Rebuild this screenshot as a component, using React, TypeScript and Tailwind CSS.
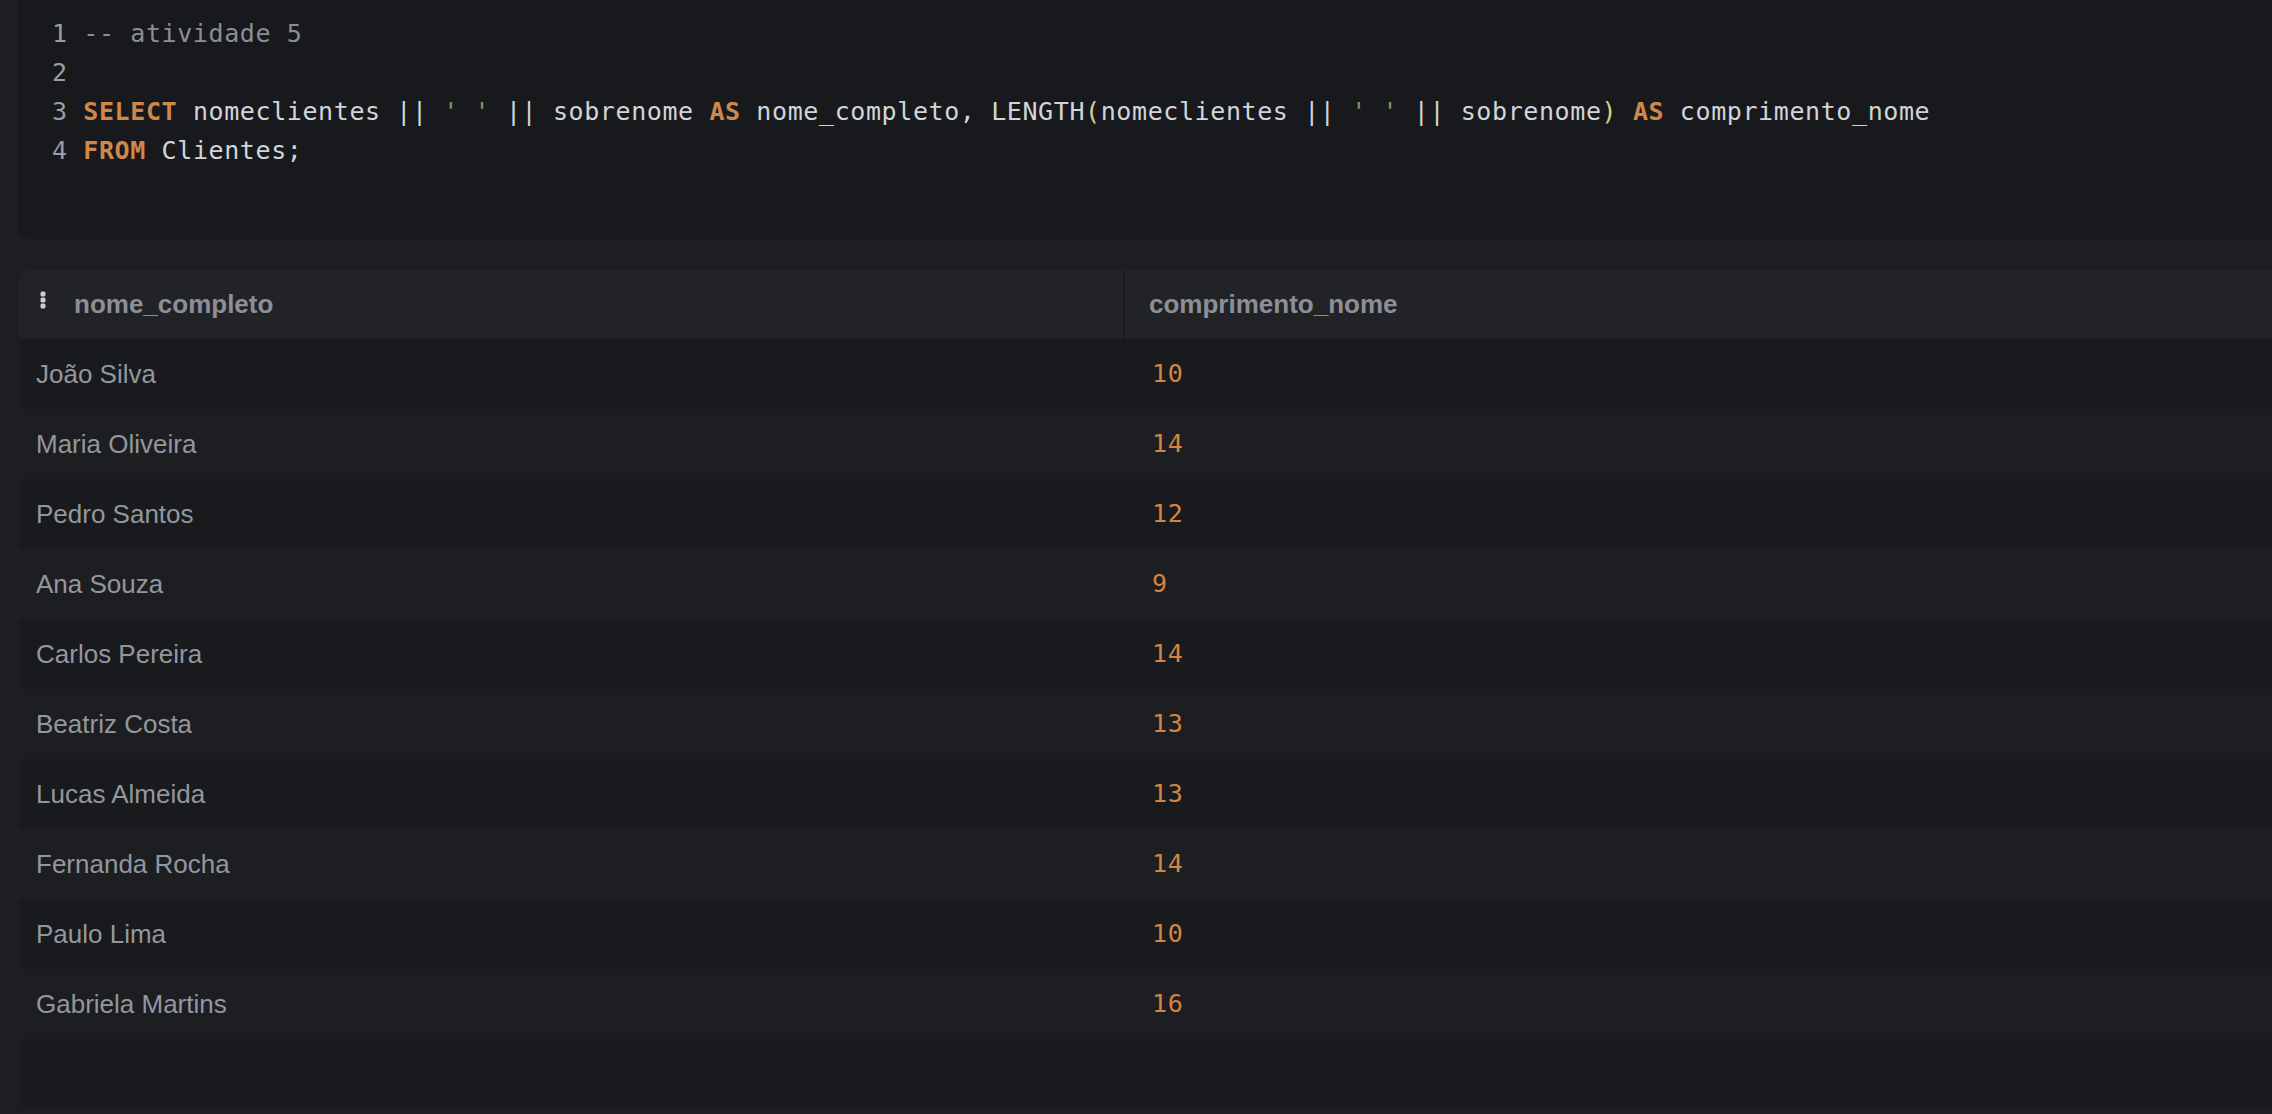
import React from "react";

const mono = "font-['DejaVu_Sans_Mono','Liberation_Mono',monospace] text-[25px] tracking-[0.6px]";
const sans = "font-['Liberation_Sans',Arial,sans-serif]";

type Tok = [string, string?];

const K = "text-[#d0874a] font-bold";
const S = "text-[#7d9867]";
const P = "text-[#d8d18e]";
const C = "text-[#8a8f96]";

const lines: Tok[][] = [
  [["-- atividade 5", C]],
  [],
  [
    ["SELECT", K],
    [" nomeclientes || "],
    ["' '", S],
    [" || sobrenome "],
    ["AS", K],
    [" nome_completo, LENGTH"],
    ["(", P],
    ["nomeclientes || "],
    ["' '", S],
    [" || sobrenome"],
    [")", P],
    [" "],
    ["AS", K],
    [" comprimento_nome"],
  ],
  [["FROM", K], [" Clientes;"]],
];

const rows: [string, number][] = [
  ["João Silva", 10],
  ["Maria Oliveira", 14],
  ["Pedro Santos", 12],
  ["Ana Souza", 9],
  ["Carlos Pereira", 14],
  ["Beatriz Costa", 13],
  ["Lucas Almeida", 13],
  ["Fernanda Rocha", 14],
  ["Paulo Lima", 10],
  ["Gabriela Martins", 16],
];

function Kebab() {
  return (
    <svg width="6" height="18" viewBox="0 0 6 18" className="shrink-0">
      <rect x="0.5" y="0.5" width="5" height="5" rx="1.5" fill="#c9cdd1" />
      <rect x="0.5" y="6.5" width="5" height="5" rx="1.5" fill="#c9cdd1" />
      <rect x="0.5" y="12.5" width="5" height="5" rx="1.5" fill="#c9cdd1" />
    </svg>
  );
}

export default function App() {
  return (
    <div className="w-[2272px] h-[1114px] overflow-hidden bg-[#1d1e22] pl-[18px] flex flex-col">
      {/* editor */}
      <div className={`h-[239px] shrink-0 bg-[#18191d] rounded-bl-[10px] pt-[14px] pl-[34px] ${mono} text-[#d2d5d8] whitespace-pre`}>
        {lines.map((toks, i) => (
          <div key={i} className="h-[39px] leading-[39px]">
            <span className="text-[#9a9da2]">{i + 1} </span>
            {toks.map(([t, cls], j) => (
              <span key={j} className={cls}>
                {t}
              </span>
            ))}
          </div>
        ))}
      </div>

      {/* results */}
      <div className="mt-[31px] ml-px h-[838px] shrink-0 bg-[#1a1b1f] rounded-tl-[10px] overflow-hidden">
        <div className={`flex h-[69px] bg-[#222327] ${sans} text-[26px] font-bold text-[#8c9096]`}>
          <div className="w-[1104px] shrink-0 flex items-center pl-[21px] gap-[28px]">
            <div className="-mt-[9px]">
              <Kebab />
            </div>
            <span>nome_completo</span>
          </div>
          <div className="w-[2px] bg-[#1b1c20]" />
          <div className="flex-1 flex items-center pl-[24px]">comprimento_nome</div>
        </div>
        {rows.map(([name, len], i) => (
          <div
            key={name}
            className={`flex h-[70px] items-center ${i % 2 === 0 ? "bg-[#191a1e]" : "bg-[#1d1e22]"}`}
          >
            <div className={`w-[1106px] shrink-0 pl-[17px] ${sans} text-[26px] text-[#93979d]`}>{name}</div>
            <div className={`pl-[27px] ${mono} text-[#d4843f]`}>{len}</div>
          </div>
        ))}
      </div>
    </div>
  );
}
